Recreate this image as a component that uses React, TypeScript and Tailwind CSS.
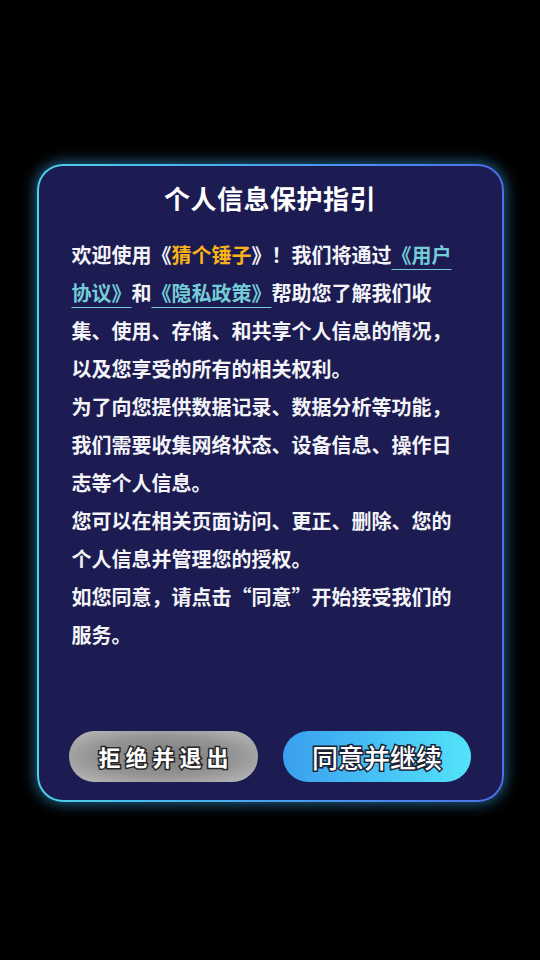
import React from "react";

const font = "font-['Noto_Sans_CJK_SC','Noto_Sans',sans-serif]";

function Link({ children }: { children: React.ReactNode }) {
  return <span className="text-[#74cdd6] underline decoration-[#74cdd6] decoration-1 underline-offset-[6px]">{children}</span>;
}

export default function App() {
  return (
    <div className={`min-h-screen w-full bg-black flex items-center justify-center pt-[6px] ${font}`}>
      <div className="w-[467px] h-[638px] rounded-[26px] p-[2px] bg-[linear-gradient(90deg,#4ad3ea,#4a8ff0_70%,#4a6fe6)] shadow-[0_0_14px_2px_rgba(60,170,240,0.55)]">
        <div className="h-full w-full rounded-[24px] bg-[#1c1c52] flex flex-col px-[33px] pt-[15px] pb-[18px]">
          <h1 className="text-center text-[26px] leading-[34px] font-bold text-white tracking-[0.5px]">个人信息保护指引</h1>
          <div className="mt-[21px] text-[20px] leading-[38px] font-bold text-[#f4f4f8]">
            <p>
              欢迎使用《<span className="text-[#f8b21a]">猜个锤子</span>》！我们将通过<Link>《用户协议》</Link>和<Link>《隐私政策》</Link>帮助您了解我们收集、使用、存储、和共享个人信息的情况，以及您享受的所有的相关权利。
            </p>
            <p>为了向您提供数据记录、数据分析等功能，我们需要收集网络状态、设备信息、操作日志等个人信息。</p>
            <p>您可以在相关页面访问、更正、删除、您的个人信息并管理您的授权。</p>
            <p>如您同意，请点击“同意”开始接受我们的服务。</p>
          </div>
          <div className="flex-1" />
          <div className="flex justify-center gap-[25px] -mx-[6px]">
            <button className="shrink-0 w-[189px] h-[51px] rounded-full bg-[radial-gradient(ellipse_at_center,#7c7c7c_0%,#959595_55%,#bdbdbd_100%)] flex items-center justify-center">
              <span className="text-[22px] font-bold text-white tracking-[5px] pl-[5px] [-webkit-text-stroke:3px_#262626] [paint-order:stroke_fill]">拒绝并退出</span>
            </button>
            <button className="shrink-0 w-[188px] h-[51px] rounded-full bg-[linear-gradient(90deg,#3b9ff0,#52e3f9)] flex items-center justify-center">
              <span className="text-[26px] font-medium text-white [-webkit-text-stroke:3px_#1d2233] [paint-order:stroke_fill]">同意并继续</span>
            </button>
          </div>
        </div>
      </div>
    </div>
  );
}
